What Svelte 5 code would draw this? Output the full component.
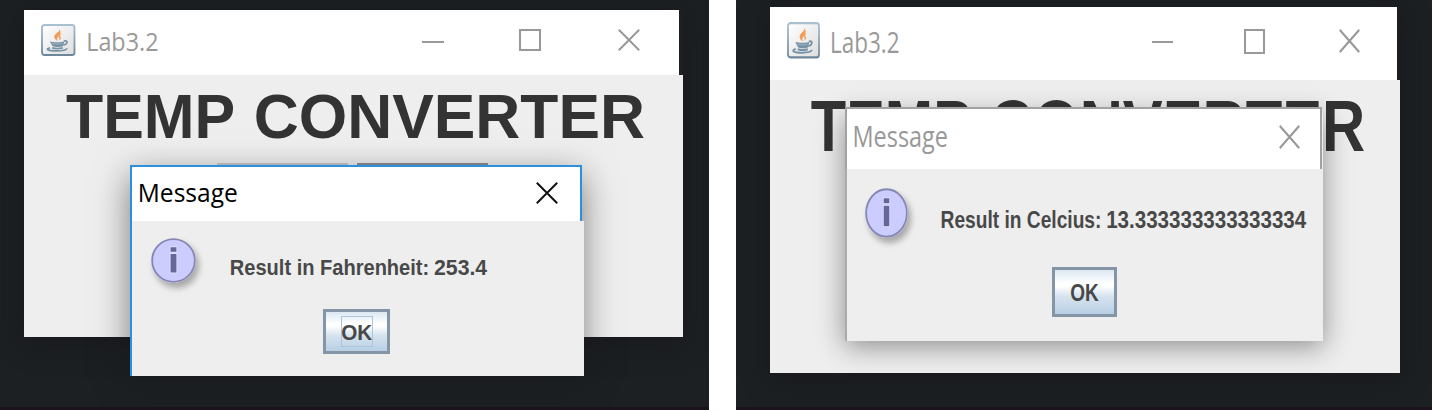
<script>
  const panes = [
    {
      cls: 'fahrenheit',
      app: { w: 72.5, h: 26, size: 26, runs: [['Lab3.2', 1.2, 72.3]] },
      heading: { w: 580, h: 62.7, size: 63.8, runs: [['TEMP', 1, 169], ['CONVERTER', 188.8, 391.2]] },
      dialog: { w: 102, h: 24.8, size: 25.7, runs: [['Message', 0.8, 100]] },
      message: { w: 258.5, h: 21.7, size: 22.6, runs: [['Result in Fahrenheit:', 0.8, 199.4], ['253.4', 205, 53.2]] },
      ok: { w: 31, h: 22, size: 21.3, runs: [['OK', 0.2, 31]] },
      focused: true
    },
    {
      cls: 'celsius',
      app: { w: 70, h: 28, size: 28.7, runs: [['Lab3.2', 1, 69.6]] },
      heading: { w: 556, h: 70.8, size: 72, runs: [['TEMP', 0.8, 161], ['CONVERTER', 180, 375.2]] },
      dialog: { w: 97, h: 26.8, size: 28.7, runs: [['Message', 0.5, 95.5]] },
      message: { w: 367, h: 24, size: 24.5, runs: [['Result in Celcius:', 0.6, 160.8], ['13.333333333333334', 166.2, 200]] },
      ok: { w: 29, h: 24, size: 24, runs: [['OK', 0.3, 28.5]] },
      focused: false
    }
  ];
</script>

{#snippet label(m, kind)}
  <svg class="label {kind}" width={m.w} height={m.h}>
    {#each m.runs as [text, x, w]}
      <text {x} y={m.h} font-size={m.size} textLength={w} lengthAdjust="spacingAndGlyphs">{text}</text>
    {/each}
  </svg>
{/snippet}

{#snippet cross()}
  <svg class="glyph" viewBox="0 0 22 22" preserveAspectRatio="none">
    <path d="M.8 .8 21.2 21.2M21.2 .8 .8 21.2" />
  </svg>
{/snippet}

<main>
  {#each panes as p}
    <section class="desktop {p.cls}">
      <div class="window">
        <header class="bar">
          <svg class="java" viewBox="0 0 34 32" preserveAspectRatio="none">
            <defs>
              <linearGradient id="tile-{p.cls}" x1="0" y1="0" x2="1" y2="1">
                <stop offset="0" stop-color="#fff" />
                <stop offset="1" stop-color="#dedede" />
              </linearGradient>
              <linearGradient id="rim-{p.cls}" x1="0" y1="0" x2="0" y2="1">
                <stop offset="0" stop-color="#a9c0d1" />
                <stop offset="1" stop-color="#6c879b" />
              </linearGradient>
            </defs>
            <rect x="1" y="1" width="32" height="30" rx="2.5" fill="url(#tile-{p.cls})" stroke="url(#rim-{p.cls})" stroke-width="1.8" />
            <path d="M18 5c1 3.300-5.300 4.600-5 8.100.2 1.900 2 3 3 3.900-.3-2-.3-3.200 1.400-4.800 1.900-1.800 2.600-4 .6-7.200z" fill="#ee9d58" />
            <path d="M21 9.200c-3.500 1.500-4.400 2.700-3.200 4.400.6 1 .3 2-.7 3 2.700-1.100 3.200-2.300 2.100-3.800-.8-1.200-.1-2.200 1.800-3.600z" fill="#f0a466" />
            <path d="M8.500 17.300c3 1.300 11.500 1.300 14.500 0l-1.200 4.800c-2 1.300-8.700 1.300-10.500 0z" fill="#7893a6" />
            <path d="M22.600 17.100c4.200-1.100 4.200 2.800-.6 4.100" fill="none" stroke="#7893a6" stroke-width="1.700" />
            <path d="M11 19.500c3 .7 7 .7 10-.1" fill="none" stroke="#c3d0d9" stroke-width=".5" />
            <path d="M9 23.700c-5.800 1.600-1.500 3.200 6.500 3.200 6 0 10-1 10-2.600M11 23.900c3 .9 7 .9 10.500 0" fill="none" stroke="#7893a6" stroke-width="1.700" />
          </svg>
          {@render label(p.app, 'caption')}
          <div class="controls">
            <i class="minimise"></i>
            <i class="maximise"></i>
            {@render cross()}
          </div>
        </header>
        <div class="body">
          {@render label(p.heading, 'bold')}
          {#if p.focused}
            <div class="peek"><i></i><i></i></div>
          {/if}
        </div>
      </div>

      <div class="dialog">
        <div class="shade"></div>
        <header class="bar">
          {@render label(p.dialog, 'caption')}
          {@render cross()}
        </header>
        <div class="body">
          <div class="row">
            <div class="info">
              <svg viewBox="0 0 46 46" preserveAspectRatio="none">
                <circle cx="23" cy="23" r="21.800" fill="#ccccff" stroke="#8686b5" stroke-width="1.900" />
                <path d="M20 9.500h6v4.500h-6zM20 16.300h6v19h-6z" fill="#666699" stroke="#e6e6ff" stroke-width="1.600" paint-order="stroke" />
              </svg>
            </div>
            {@render label(p.message, 'bold small')}
          </div>
          <button class:focused={p.focused}>
            {@render label(p.ok, 'bold small')}
          </button>
        </div>
      </div>
    </section>
  {/each}
</main>

<style>
  main {
    display: flex;
    justify-content: space-between;
    width: 1432px;
    height: 410px;
    background: #fff;
  }
  .desktop {
    position: relative;
    overflow: hidden;
    box-sizing: border-box;
    height: 410px;
    background: #1c2023;
    border-bottom: 3px solid #1c121d;
  }
  .label { display: block; flex: none; overflow: visible; }
  .caption { font-family: "Open Sans", "Noto Sans", sans-serif; fill: #999; }
  .bold { font-family: "Liberation Sans", Arial, sans-serif; font-weight: 700; fill: #333; }
  .small { fill: #484848; }
  .bar { position: relative; display: flex; align-items: flex-start; box-sizing: border-box; background: #fff; }
  .body { position: relative; box-sizing: border-box; background: #eee; }
  .window, .dialog { position: absolute; }
  .window { box-shadow: 0 5px 24px rgba(24, 22, 26, .7); }
  .controls { display: flex; margin-left: auto; }
  .controls i { box-sizing: border-box; }
  .minimise { height: 2px; background: #999; }
  .maximise { border: 2px solid #999; }
  .glyph { display: block; fill: none; stroke: #999; stroke-width: 2; overflow: visible; }
  .dialog .bar { justify-content: space-between; }
  .shade { position: absolute; inset: 0; }
  .row { display: flex; align-items: flex-start; }
  .info { flex: none; border-radius: 50%; box-shadow: 3px 5px 6px rgba(0, 0, 0, .3); }
  .info svg { display: block; width: 100%; height: 100%; }
  button {
    display: flex;
    justify-content: center;
    align-items: flex-start;
    box-sizing: border-box;
    border: 3px solid #8496a6;
    padding: 0;
    background: linear-gradient(#dce8f2 0, #fff 30%, #fff 36%, #d6e3ee 60%, #b8cfe5 100%);
  }

  /* left pane */
  .fahrenheit { width: 708.5px; }
  .fahrenheit .window { left: 24px; top: 10px; width: 658.500px; }
  .fahrenheit .window > .bar { width: 654.500px; height: 65px; padding: 13.500px 38.500px 0 17px; }
  .fahrenheit .java { width: 34.500px; height: 32px; }
  .fahrenheit .window > .bar .label { margin: 1.500px 0 0 9px; }
  .fahrenheit .controls { padding-top: 5.500px; }
  .fahrenheit .minimise { width: 22px; margin: 11.500px 75px 0 0; }
  .fahrenheit .maximise { width: 22px; height: 22px; margin-right: 77px; }
  .fahrenheit .glyph { width: 22px; height: 22px; }
  .fahrenheit .window > .body { height: 262px; padding: 0 0 0 41px; }
  .peek { display: flex; gap: 9px; margin: 25.800px 0 0 152px; }
  .peek i { width: 131px; height: 3px; background: #c6c9cc; }
  .peek i + i { background: #8b8d90; }
  .fahrenheit .dialog { left: 130px; top: 165px; width: 453.500px; }
  .fahrenheit .shade { top: 8px; right: 2px; box-shadow: 0 3px 32px rgba(24, 22, 26, .54); }
  .fahrenheit .dialog > .bar { width: 451.500px; height: 56px; border: 2px solid #2c8fdf; border-bottom: 0; padding: 15px 21.500px 0 4.500px; }
  .fahrenheit .dialog .caption { margin-top: -5.500px; fill: #000; }
  .fahrenheit .dialog .glyph { stroke: #111; }
  .fahrenheit .dialog > .body { height: 155px; border-left: 2px solid #2c8fdf; padding: 17px 0 0 18.500px; }
  .fahrenheit .info { width: 45px; height: 45px; }
  .fahrenheit .row .label { margin: 15px 0 0 33.500px; }
  .fahrenheit button { width: 67px; height: 45px; margin: 26px 0 0 172.500px; padding-top: 5.500px; }

  /* right pane */
  .celsius { width: 696px; }
  .celsius .window { left: 34.400px; top: 7px; width: 630px; }
  .celsius .window > .bar { width: 626.500px; height: 72.500px; padding: 15px 36.500px 0 16.500px; }
  .celsius .java { width: 33px; height: 36.500px; }
  .celsius .window > .bar .label { margin: 2.500px 0 0 9.500px; }
  .celsius .controls { padding-top: 7px; }
  .celsius .minimise { width: 21px; margin: 12px 71.500px 0 0; }
  .celsius .maximise { width: 21px; height: 24.500px; margin-right: 74px; }
  .celsius .glyph { width: 21px; height: 24px; }
  .celsius .window > .body { height: 293.500px; padding: 0 0 0 40px; }
  .celsius .dialog { left: 109.400px; top: 107px; width: 477.500px; }
  .celsius .shade { top: 6px; box-shadow: 0 5px 26px rgba(24, 22, 26, .46); }
  .celsius .dialog > .bar { width: 476.500px; height: 61.500px; border: 2px solid #a2a2a2; border-bottom: 0; padding: 16px 20px 0 5px; }
  .celsius .dialog .caption { margin-top: -5.500px; }
  .celsius .dialog > .body { height: 172.500px; border-left: 2px solid #aaa; padding: 19px 0 0 17.500px; }
  .celsius .info { width: 43px; height: 50px; }
  .celsius .row .label { margin: 16.500px 0 0 31.700px; }
  .celsius button { width: 64.500px; height: 50px; margin: 29px 0 0 187.500px; padding-top: 7.500px; }

  .focused { position: relative; }
  .focused::before { content: ""; position: absolute; inset: 4px 14px 4px 15px; border: 1.500px solid #adc5db; }
  .focused .label { position: relative; }
</style>
